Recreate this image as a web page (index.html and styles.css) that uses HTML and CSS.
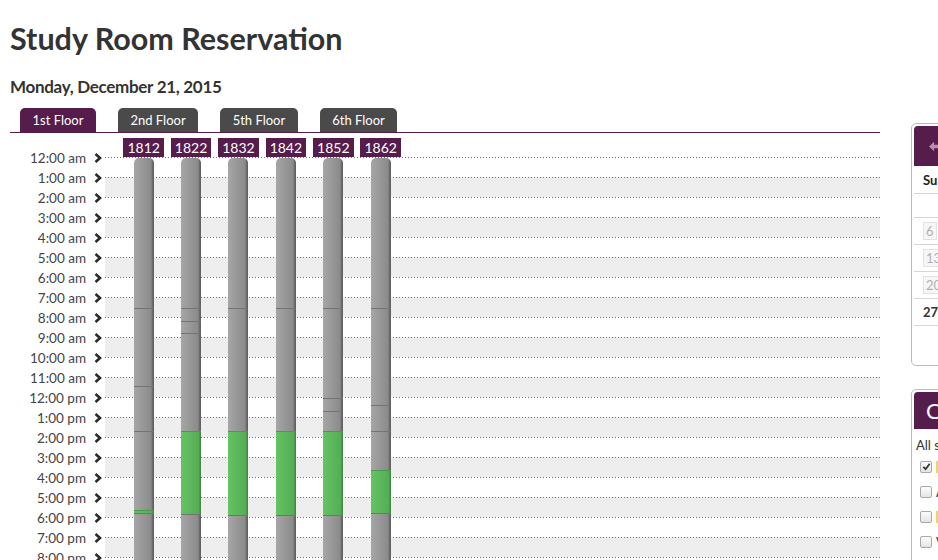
FILE: index.html
```html
<!DOCTYPE html>
<html lang="en">
<head>
<meta charset="utf-8">
<title>Study Room Reservation</title>
<link rel="stylesheet" href="styles.css">
</head>
<body>
<div class="page">
  <main class="main">
    <h1 class="title">Study Room Reservation</h1>
    <h2 class="date">Monday, December 21, 2015</h2>
    <nav class="tabs">
      <a class="tab active">1st Floor</a>
      <a class="tab">2nd Floor</a>
      <a class="tab">5th Floor</a>
      <a class="tab">6th Floor</a>
    </nav>
    <div class="schedule">
      <ol class="times">
        <li>12:00 am <svg class="chev" viewBox="0 0 8 10"><path d="M1.5 1 L6 5 L1.5 9"/></svg></li>
        <li>1:00 am <svg class="chev" viewBox="0 0 8 10"><path d="M1.5 1 L6 5 L1.5 9"/></svg></li>
        <li>2:00 am <svg class="chev" viewBox="0 0 8 10"><path d="M1.5 1 L6 5 L1.5 9"/></svg></li>
        <li>3:00 am <svg class="chev" viewBox="0 0 8 10"><path d="M1.5 1 L6 5 L1.5 9"/></svg></li>
        <li>4:00 am <svg class="chev" viewBox="0 0 8 10"><path d="M1.5 1 L6 5 L1.5 9"/></svg></li>
        <li>5:00 am <svg class="chev" viewBox="0 0 8 10"><path d="M1.5 1 L6 5 L1.5 9"/></svg></li>
        <li>6:00 am <svg class="chev" viewBox="0 0 8 10"><path d="M1.5 1 L6 5 L1.5 9"/></svg></li>
        <li>7:00 am <svg class="chev" viewBox="0 0 8 10"><path d="M1.5 1 L6 5 L1.5 9"/></svg></li>
        <li>8:00 am <svg class="chev" viewBox="0 0 8 10"><path d="M1.5 1 L6 5 L1.5 9"/></svg></li>
        <li>9:00 am <svg class="chev" viewBox="0 0 8 10"><path d="M1.5 1 L6 5 L1.5 9"/></svg></li>
        <li>10:00 am <svg class="chev" viewBox="0 0 8 10"><path d="M1.5 1 L6 5 L1.5 9"/></svg></li>
        <li>11:00 am <svg class="chev" viewBox="0 0 8 10"><path d="M1.5 1 L6 5 L1.5 9"/></svg></li>
        <li>12:00 pm <svg class="chev" viewBox="0 0 8 10"><path d="M1.5 1 L6 5 L1.5 9"/></svg></li>
        <li>1:00 pm <svg class="chev" viewBox="0 0 8 10"><path d="M1.5 1 L6 5 L1.5 9"/></svg></li>
        <li>2:00 pm <svg class="chev" viewBox="0 0 8 10"><path d="M1.5 1 L6 5 L1.5 9"/></svg></li>
        <li>3:00 pm <svg class="chev" viewBox="0 0 8 10"><path d="M1.5 1 L6 5 L1.5 9"/></svg></li>
        <li>4:00 pm <svg class="chev" viewBox="0 0 8 10"><path d="M1.5 1 L6 5 L1.5 9"/></svg></li>
        <li>5:00 pm <svg class="chev" viewBox="0 0 8 10"><path d="M1.5 1 L6 5 L1.5 9"/></svg></li>
        <li>6:00 pm <svg class="chev" viewBox="0 0 8 10"><path d="M1.5 1 L6 5 L1.5 9"/></svg></li>
        <li>7:00 pm <svg class="chev" viewBox="0 0 8 10"><path d="M1.5 1 L6 5 L1.5 9"/></svg></li>
        <li>8:00 pm <svg class="chev" viewBox="0 0 8 10"><path d="M1.5 1 L6 5 L1.5 9"/></svg></li>
        <li>9:00 pm <svg class="chev" viewBox="0 0 8 10"><path d="M1.5 1 L6 5 L1.5 9"/></svg></li>
        <li>10:00 pm <svg class="chev" viewBox="0 0 8 10"><path d="M1.5 1 L6 5 L1.5 9"/></svg></li>
        <li>11:00 pm <svg class="chev" viewBox="0 0 8 10"><path d="M1.5 1 L6 5 L1.5 9"/></svg></li>
      </ol>
      <div class="board">
        <div class="rows">
          <div class="row"></div><div class="row"></div><div class="row"></div><div class="row"></div>
          <div class="row"></div><div class="row"></div><div class="row"></div><div class="row"></div>
          <div class="row"></div><div class="row"></div><div class="row"></div><div class="row"></div>
          <div class="row"></div><div class="row"></div><div class="row"></div><div class="row"></div>
          <div class="row"></div><div class="row"></div><div class="row"></div><div class="row"></div>
          <div class="row"></div><div class="row"></div><div class="row"></div><div class="row"></div>
        </div>
        <div class="rooms">
          <div class="room">
            <span class="room-label">1812</span>
            <div class="bar">
              <div class="seg" style="height:150px"></div>
              <div class="seg" style="height:78px"></div>
              <div class="seg" style="height:45px"></div>
              <div class="seg" style="height:79px"></div>
              <div class="seg free" style="height:3px"></div>
              <div class="seg" style="height:125px"></div>
            </div>
          </div>
          <div class="room">
            <span class="room-label">1822</span>
            <div class="bar">
              <div class="seg" style="height:150px"></div>
              <div class="seg" style="height:13px"></div>
              <div class="seg" style="height:12px"></div>
              <div class="seg" style="height:98px"></div>
              <div class="seg free" style="height:83px"></div>
              <div class="seg" style="height:124px"></div>
            </div>
          </div>
          <div class="room">
            <span class="room-label">1832</span>
            <div class="bar">
              <div class="seg" style="height:150px"></div>
              <div class="seg" style="height:123px"></div>
              <div class="seg free" style="height:84px"></div>
              <div class="seg" style="height:123px"></div>
            </div>
          </div>
          <div class="room">
            <span class="room-label">1842</span>
            <div class="bar">
              <div class="seg" style="height:150px"></div>
              <div class="seg" style="height:123px"></div>
              <div class="seg free" style="height:84px"></div>
              <div class="seg" style="height:123px"></div>
            </div>
          </div>
          <div class="room">
            <span class="room-label">1852</span>
            <div class="bar">
              <div class="seg" style="height:150px"></div>
              <div class="seg" style="height:90px"></div>
              <div class="seg" style="height:13px"></div>
              <div class="seg" style="height:20px"></div>
              <div class="seg free" style="height:84px"></div>
              <div class="seg" style="height:123px"></div>
            </div>
          </div>
          <div class="room">
            <span class="room-label">1862</span>
            <div class="bar">
              <div class="seg" style="height:150px"></div>
              <div class="seg" style="height:97px"></div>
              <div class="seg" style="height:26px"></div>
              <div class="seg" style="height:39px"></div>
              <div class="seg free" style="height:43px"></div>
              <div class="seg" style="height:125px"></div>
            </div>
          </div>
        </div>
      </div>
    </div>
  </main>

  <aside class="side">
    <div class="panel cal">
      <div class="cal-head">
        <svg class="cal-prev" viewBox="0 0 14 12"><path d="M0 6 L6 0.5 L6 4 L14 4 L14 8 L6 8 L6 11.5 Z"/></svg>
        <span class="cal-month">December 2015</span>
      </div>
      <table class="cal-table">
        <thead>
          <tr><th>Su</th><th>Mo</th><th>Tu</th><th>We</th><th>Th</th><th>Fr</th><th>Sa</th></tr>
        </thead>
        <tbody>
          <tr class="wk-first"><td></td><td></td><td><span class="day off">1</span></td><td><span class="day off">2</span></td><td><span class="day off">3</span></td><td><span class="day off">4</span></td><td><span class="day off">5</span></td></tr>
          <tr><td><span class="day off">6</span></td><td><span class="day off">7</span></td><td><span class="day off">8</span></td><td><span class="day off">9</span></td><td><span class="day off">10</span></td><td><span class="day off">11</span></td><td><span class="day off">12</span></td></tr>
          <tr><td><span class="day off">13</span></td><td><span class="day off">14</span></td><td><span class="day off">15</span></td><td><span class="day off">16</span></td><td><span class="day off">17</span></td><td><span class="day off">18</span></td><td><span class="day off">19</span></td></tr>
          <tr><td><span class="day off">20</span></td><td><span class="day">21</span></td><td><span class="day">22</span></td><td><span class="day">23</span></td><td><span class="day">24</span></td><td><span class="day">25</span></td><td><span class="day">26</span></td></tr>
          <tr><td><span class="day">27</span></td><td><span class="day">28</span></td><td><span class="day">29</span></td><td><span class="day">30</span></td><td><span class="day">31</span></td><td></td><td></td></tr>
        </tbody>
      </table>
      <div class="cal-foot"></div>
    </div>

    <div class="panel opts">
      <div class="opts-head">Capacity</div>
      <div class="opts-body">
        <p class="opts-all">All sizes</p>
        <label class="opt"><span class="box checked"><svg viewBox="0 0 10 10"><path d="M1.5 5.5 L4 8 L8.5 2"/></svg></span><span class="swatch"></span>1–2 people</label>
        <label class="opt"><span class="box"></span>Any size</label>
        <label class="opt"><span class="box"></span><span class="swatch"></span>3–4 people</label>
        <label class="opt"><span class="box"></span>Very large</label>
      </div>
    </div>
  </aside>
</div>
</body>
</html>
```

FILE: styles.css
```css
html, body {
  margin: 0;
  padding: 0;
  overflow: hidden;
}

body {
  width: 938px;
  height: 560px;
  font-family: Lato, "Open Sans", sans-serif;
  color: #333;
  background: #fff;
}

.page {
  display: flex;
  align-items: flex-start;
}

.main {
  flex: none;
  width: 870px;
  padding-left: 10px;
}

.title {
  margin: 20px 0 0;
  font-size: 30.5px;
  line-height: 36px;
  font-weight: 700;
  color: #333;
}

.date {
  margin: 20px 0 0;
  font-size: 17px;
  line-height: 22px;
  letter-spacing: -0.3px;
  font-weight: 700;
  color: #333;
}

.tabs {
  display: flex;
  gap: 22px;
  margin-top: 10px;
  padding-left: 10px;
  border-bottom: 1px solid #561c4c;
}

.tab {
  height: 24px;
  line-height: 24px;
  padding: 0 12.5px;
  background: #4a4a4a;
  color: #fff;
  font-size: 13px;
  border-radius: 5px 5px 0 0;
}

.tab.active {
  background: #561c4c;
}

.schedule {
  display: flex;
  align-items: flex-start;
}

.times {
  flex: none;
  width: 95px;
  list-style: none;
  margin: 0;
  padding: 15px 0 0;
}

.times li {
  height: 20px;
  display: flex;
  align-items: center;
  justify-content: flex-end;
  gap: 8px;
  padding-right: 3px;
  font-size: 13.5px;
  color: #444;
  white-space: nowrap;
}

.chev {
  width: 8px;
  height: 10px;
  fill: none;
  stroke: #2a2a2a;
  stroke-width: 2.6;
}

.board {
  flex: 1;
  display: grid;
}

.rows,
.rooms {
  grid-area: 1 / 1;
}

.rows {
  padding-top: 24px;
}

.row {
  height: 20px;
  background: linear-gradient(to right, #707070 1px, transparent 1px) 0 0 / 3px 1px repeat-x;
}

.row:nth-child(even) {
  background-color: #eeeeee;
}

.rooms {
  display: flex;
  padding: 5px 0 0 15px;
}

.room {
  width: 47.4px;
  display: flex;
  flex-direction: column;
  align-items: center;
}

.room-label {
  height: 19px;
  line-height: 19px;
  padding: 0 4px;
  background: #561c4c;
  color: #fff;
  font-size: 14px;
}

.bar {
  width: 20px;
  margin-top: 1px;
  border-radius: 5px 5px 0 0;
  overflow: hidden;
}

.seg {
  box-sizing: border-box;
  border-top: 1px solid #737373;
  background: linear-gradient(to right, #a6a6a6, #8b8b8b 85%, #6c6c6c 92%, #5c5c5c);
}

.seg:first-child {
  border-top: 0;
}

.seg.free {
  border-top-color: #4a9a4a;
  background: linear-gradient(to right, #64c464, #55ad55 88%, #468f46 95%, #3f813f);
}

/* sidebar */
.side {
  flex: none;
  width: 260px;
  margin-left: 31px;
  margin-top: 123px;
  display: flex;
  flex-direction: column;
  gap: 23px;
}

.panel {
  border: 1px solid #bbb;
  border-radius: 5px;
  padding: 2px;
  background: #fff;
}

.cal-head {
  height: 40px;
  background: #561c4c;
  border-radius: 4px 4px 0 0;
  display: flex;
  align-items: center;
  padding-left: 15px;
  color: #fff;
  font-weight: 700;
  font-size: 14px;
  gap: 60px;
}

.cal-prev {
  width: 12px;
  height: 11px;
  fill: #b690ae;
}

.cal-table {
  width: 100%;
  border-collapse: collapse;
  font-size: 13px;
}

.cal-table th {
  height: 27px;
  text-align: left;
  padding: 0 0 0 9px;
  font-weight: 700;
  color: #222;
}

.cal-table tr {
  border-top: 1px solid #d6d6d6;
}

.cal-table thead tr {
  border-top: 0;
}

.cal-table td {
  height: 26px;
  padding: 0 0 0 9px;
}

.cal-table .wk-first td {
  height: 23px;
}

.day {
  display: inline-block;
  font-weight: 700;
  color: #333;
}

.day.off {
  font-weight: 400;
  color: #b0b0b0;
  background: #f6f6f6;
  border: 1px solid #e2e2e2;
  padding: 1px 2px;
  line-height: 14px;
}

.cal-foot {
  height: 37px;
  border-top: 1px solid #d6d6d6;
}

.opts-head {
  height: 37px;
  line-height: 37px;
  background: #561c4c;
  border-radius: 4px 4px 0 0;
  padding-left: 12px;
  color: #fff;
  font-size: 22px;
}

.opts-body {
  padding: 8px 2px 10px;
  font-size: 13px;
}

.opts-all {
  margin: 0 0 1px;
  line-height: 16px;
}

.opt {
  display: flex;
  align-items: center;
  gap: 4px;
  height: 25px;
  padding-left: 4px;
  color: #333;
}

.box {
  width: 10px;
  height: 10px;
  border: 1px solid #a9a9a9;
  border-radius: 2px;
  background: linear-gradient(#fdfdfd, #e4e4e4);
  display: flex;
  align-items: center;
  justify-content: center;
}

.box svg {
  width: 9px;
  height: 9px;
  fill: none;
  stroke: #333;
  stroke-width: 2;
}

.swatch {
  width: 10px;
  height: 12px;
  background: #f2d36b;
}
```
